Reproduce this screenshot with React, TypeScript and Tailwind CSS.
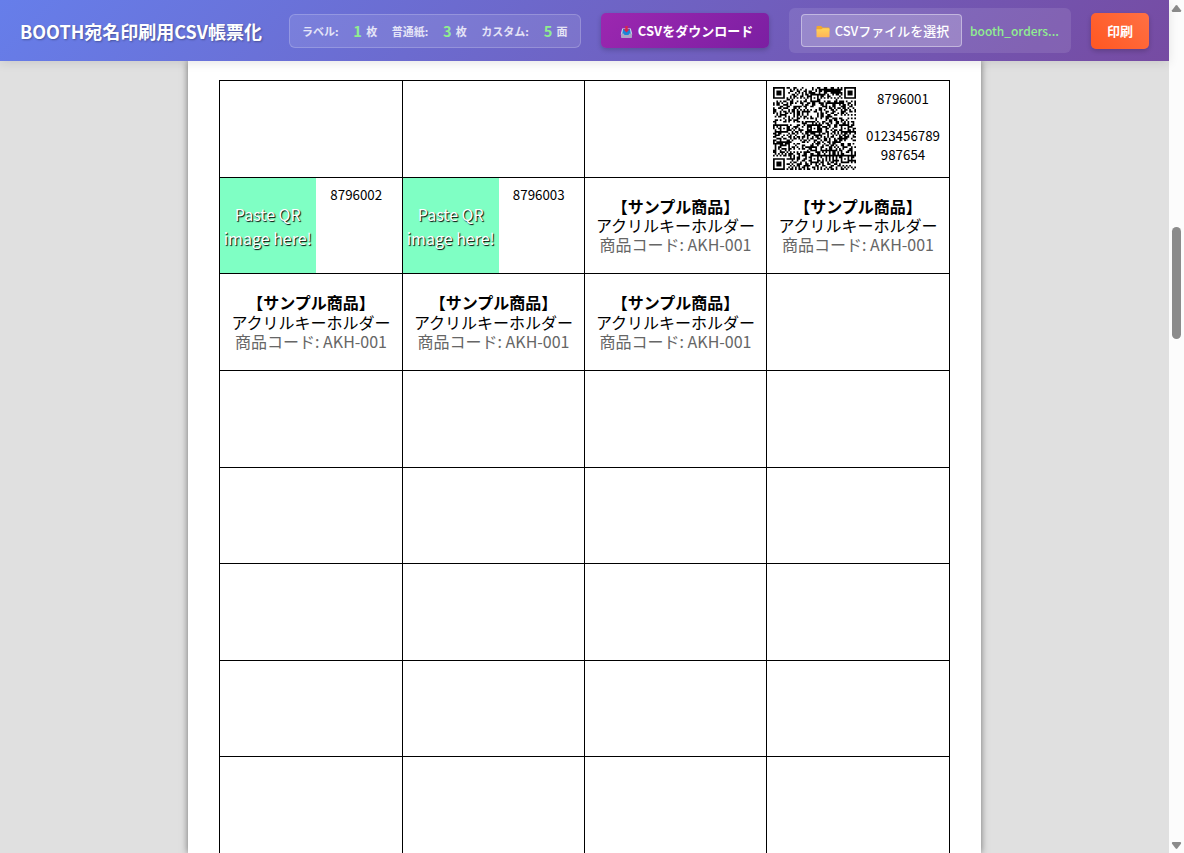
import React from "react";

const SIZE = 49;

function buildQr(): string {
  const grid: boolean[][] = [];
  let seed = 20731;
  for (let y = 0; y < SIZE; y++) {
    grid.push([]);
    for (let x = 0; x < SIZE; x++) {
      seed = (seed * 1103515245 + 12345) % 2147483648;
      grid[y].push(((seed >> 12) & 1) === 1);
    }
  }
  const finder = (ox: number, oy: number) => {
    for (let y = -1; y < 8; y++)
      for (let x = -1; x < 8; x++) {
        const gx = ox + x;
        const gy = oy + y;
        if (gx < 0 || gy < 0 || gx >= SIZE || gy >= SIZE) continue;
        const d = Math.max(Math.abs(x - 3), Math.abs(y - 3));
        grid[gy][gx] = d === 3 || d < 2;
      }
  };
  for (let i = 8; i < SIZE - 8; i++) {
    grid[6][i] = i % 2 === 0;
    grid[i][6] = i % 2 === 0;
  }
  const anchors = [[24, 6], [6, 24], [24, 24], [42, 24], [24, 42], [42, 42]];
  for (const [cx, cy] of anchors)
    for (let y = -2; y < 3; y++)
      for (let x = -2; x < 3; x++)
        grid[cy + y][cx + x] = Math.max(Math.abs(x), Math.abs(y)) !== 1;
  finder(0, 0);
  finder(SIZE - 7, 0);
  finder(0, SIZE - 7);
  let d = "";
  grid.forEach((row, y) =>
    row.forEach((on, x) => {
      if (on) d += `M${x} ${y}h1v1h-1z`;
    }),
  );
  return d;
}

const qrPath = buildQr();

function InboxIcon() {
  return (
    <svg width="13" height="14" viewBox="0 0 13 14" className="mr-[5px] mt-[2px] shrink-0">
      <path d="M2.2 3.5h8.6l1.5 6H.7z" fill="#d5e3ee" />
      <path d="M3 4h7l1 6H2z" fill="#1b86d8" />
      <path d="M1 8.6h2.600l1 1.500h3.800l1-1.500H12v3.600q0 .8-.8.8H1.800q-.8 0-.8-.8z" fill="#aaa6c6" />
      <path d="M5.300 1h2.400v3.200h2L6.500 7.400 3.300 4.200h2z" fill="#d8244c" />
    </svg>
  );
}

function FolderIcon() {
  return (
    <svg width="14" height="14" viewBox="0 0 14 14" className="mr-[5px] mt-[2px] shrink-0">
      <defs>
        <linearGradient id="folder" x1="0" y1="0" x2="0" y2="1">
          <stop offset="0" stopColor="#ffd45a" />
          <stop offset="1" stopColor="#ffb457" />
        </linearGradient>
      </defs>
      <path d="M.5 2q0-1 1-1h3.600l1.500 1.500h6q.9 0 .9 1V6H.5z" fill="#f0a62f" />
      <path d="M.5 4.200h4.800l1.500-1h5.800q.9 0 .9.9v7.300q0 .9-.9.9H1.400q-.9 0-.9-.9z" fill="url(#folder)" />
    </svg>
  );
}

function Count({ label, value, unit }: { label: string; value: number; unit: string }) {
  return (
    <div className="flex items-center">
      <span className="pt-px">{label}</span>
      <span className="ml-[14.600px] w-[9px] text-center text-[14.600px] text-[#90ee90]">{value}</span>
      <span className="ml-[4px] pt-px">{unit}</span>
    </div>
  );
}

function Header() {
  return (
    <header className="relative z-10 flex h-[61px] shrink-0 items-center bg-[linear-gradient(135deg,#667eea_0%,#764ba2_100%)] pl-5 text-white shadow-[0_2px_10px_rgba(0,0,0,0.1)]">
      <h1 className="w-[269px] shrink-0 text-[18px] font-bold leading-[26px] [text-shadow:1px_1px_2px_rgba(0,0,0,0.3)]">
        BOOTH宛名印刷用CSV帳票化
      </h1>
      <div className="flex h-[34px] w-[292px] shrink-0 items-center gap-[14.500px] rounded-[6px] border border-white/20 bg-white/10 pl-3 text-[11px] font-bold text-white/80">
        <Count label="ラベル:" value={1} unit="枚" />
        <Count label="普通紙:" value={3} unit="枚" />
        <Count label="カスタム:" value={5} unit="面" />
      </div>
      <button className="ml-5 flex h-[35px] w-[168px] shrink-0 items-center justify-center rounded-[5px] bg-[linear-gradient(135deg,#9c27b0,#7b1fa2)] pl-[3px] text-[13px] font-bold shadow-[0_2px_5px_rgba(0,0,0,0.2)]">
        <InboxIcon />
        CSVをダウンロード
      </button>
      <div className="ml-5 flex h-[45px] w-[282px] shrink-0 items-center rounded-[6px] bg-white/10 pl-3">
        <button className="flex h-[33px] w-[161px] items-center justify-center rounded-[4px] border border-white/40 bg-white/20 pl-[2px] text-[13px] font-medium">
          <FolderIcon />
          CSVファイルを選択
        </button>
        <span className="ml-2 text-[12px] font-medium text-[#90ee90]">booth_orders...</span>
      </div>
      <button className="ml-5 h-9 w-[58px] shrink-0 rounded-[5px] bg-[linear-gradient(45deg,#ff5722,#ff7043)] text-[13px] font-bold shadow-[0_2px_5px_rgba(0,0,0,0.2)]">
        印刷
      </button>
    </header>
  );
}

function Product() {
  return (
    <div className="flex h-full flex-col items-center justify-center whitespace-nowrap text-[16px] leading-[19.200px]">
      <b>【サンプル商品】</b>
      <span>アクリルキーホルダー</span>
      <span className="text-[#666]">商品コード: AKH-001</span>
    </div>
  );
}

function PasteQr({ id }: { id: string }) {
  return (
    <div className="flex h-full">
      <div className="flex w-[95.500px] shrink-0 items-center justify-center bg-[#7fffc4] pt-px text-center text-[16px] leading-6 text-white [text-shadow:1px_1px_1px_#000]">
        <span>
          Paste QR
          <br />
          image here!
        </span>
      </div>
      <p className="grow pr-[5px] pt-[7px] text-center text-[13.333px] leading-[19px]">{id}</p>
    </div>
  );
}

function QrCell() {
  return (
    <div className="flex h-full">
      <svg width="83" height="83" viewBox="0 0 49 49" className="ml-[6px] mt-[6px] shrink-0">
        <path d={qrPath} fill="#000" />
      </svg>
      <div className="grow pl-[1px] pt-[8px] text-center text-[13.333px] leading-[19px]">
        <p>8796001</p>
        <p className="mt-[18px]">
          0123456789
          <br />
          987654
        </p>
      </div>
    </div>
  );
}

const cells: React.ReactNode[] = [
  null, null, null, <QrCell />,
  <PasteQr id="8796002" />, <PasteQr id="8796003" />, <Product />, <Product />,
  <Product />, <Product />, <Product />, null,
  ...Array.from({ length: 20 }, () => null),
];

function Scrollbar() {
  return (
    <div className="flex w-[15px] shrink-0 flex-col items-center bg-[#fcfcfc]">
      <svg width="15" height="15" viewBox="0 0 15 15">
        <path d="M6.700 5.500q.8-.9 1.600 0L12 10.300q.5 1.700-.7 1.700H3.700q-1.200 0-.7-1.700z" fill="#8b8b8b" />
      </svg>
      <div className="mt-[212px] h-[112px] w-[9px] rounded-full bg-[#8b8b8b]" />
      <div className="grow" />
      <svg width="15" height="15" viewBox="0 0 15 15">
        <path d="M6.700 10.500q.8.9 1.600 0L12 5.700Q12.500 4 11.300 4H3.700Q2.500 4 3 5.700z" fill="#8b8b8b" />
      </svg>
    </div>
  );
}

export default function App() {
  return (
    <div lang="ja" className="flex h-[853px] w-[1184px] overflow-hidden font-['Noto_Sans_CJK_JP',sans-serif]">
      <div className="flex w-[1169px] flex-col bg-[#e0e0e0]">
        <Header />
        <main className="flex min-h-0 grow pl-[188px]">
          <section className="w-[793px] bg-white pl-[31px] pt-[19.200px] text-black shadow-[0_0_7px_rgba(0,0,0,0.5)]">
            <div className="grid w-[731px] auto-rows-[96.600px] grid-cols-[183px_182px_182px_183px] border-r border-black">
              {cells.map((cell, i) => (
                <div key={i} className="overflow-hidden border-l border-t border-black">
                  {cell}
                </div>
              ))}
            </div>
          </section>
        </main>
      </div>
      <Scrollbar />
    </div>
  );
}
